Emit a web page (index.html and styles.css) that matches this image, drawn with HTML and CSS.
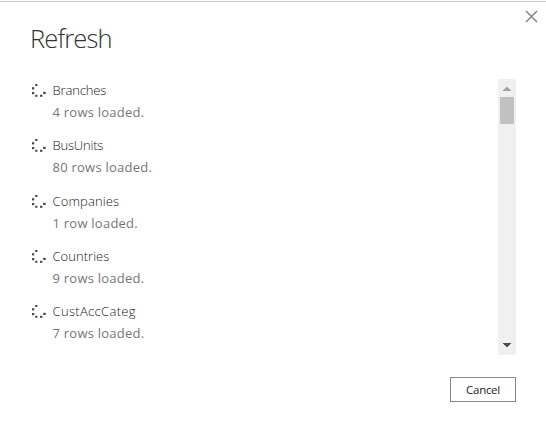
FILE: index.html
```html
<!DOCTYPE html>
<html lang="en">
<head>
<meta charset="utf-8">
<title>Refresh</title>
<link rel="stylesheet" href="styles.css">
</head>
<body>
<svg width="0" height="0" class="defs" aria-hidden="true">
  <symbol id="dots" viewBox="0 0 16 16">
    <g fill="#484848"><rect x="5.2" y="2" width="2.2" height="2"/><rect x="2" y="5.2" width="2.2" height="2.2"/><rect x="2" y="10" width="2.2" height="2.2"/><rect x="5.2" y="12.8" width="2.2" height="2"/><rect x="10" y="12.8" width="2.4" height="2"/><rect x="13.2" y="9.8" width="2.5" height="2.2"/></g>
  </symbol>
</svg>
<main class="dialog">
  <button class="close" aria-label="Close"><svg width="13" height="13" viewBox="0 0 13 13"><path d="M1 1 12 12M12 1 1 12" stroke="#858585" stroke-width="1.5"/></svg></button>
  <h1>Refresh</h1>
  <section class="content">
    <ul class="tables">
      <li><svg class="spinner"><use href="#dots"/></svg><div><p class="name n1">Branches</p><p class="status">4 rows loaded.</p></div></li>
      <li><svg class="spinner"><use href="#dots"/></svg><div><p class="name n2">BusUnits</p><p class="status">80 rows loaded.</p></div></li>
      <li><svg class="spinner"><use href="#dots"/></svg><div><p class="name n3">Companies</p><p class="status">1 row loaded.</p></div></li>
      <li><svg class="spinner"><use href="#dots"/></svg><div><p class="name n4">Countries</p><p class="status">9 rows loaded.</p></div></li>
      <li><svg class="spinner"><use href="#dots"/></svg><div><p class="name n5">CustAccCateg</p><p class="status">7 rows loaded.</p></div></li>
    </ul>
    <div class="scrollbar">
      <svg width="18" height="18" shape-rendering="crispEdges"><path d="M4.5 12 9 7.5 13.5 12Z" fill="#a3a3a3"/></svg>
      <div class="thumb"></div>
      <svg class="down" width="18" height="18" shape-rendering="crispEdges"><path d="M4.5 6 9 10.5 13.5 6Z" fill="#505050"/></svg>
    </div>
  </section>
  <footer><button class="cancel">Cancel</button></footer>
</main>
</body>
</html>
```
FILE: styles.css
```css
* { box-sizing: border-box; }
body { margin: 0; background: #fff; font-family: "Open Sans", "Noto Sans", sans-serif; }
h1, p, ul { margin: 0; padding: 0; }
.defs { position: absolute; }
.dialog { position: relative; height: 428px; padding: 19px 30px 0; border-top: 1px solid #fff; box-shadow: inset 0 1px 0 #c8c8c8; }
.close { position: absolute; top: 9px; right: 8px; width: 13px; height: 13px; padding: 0; border: 0; background: none; }
.close svg { display: block; }
h1 { height: 59px; font-size: 25.5px; line-height: 37px; font-weight: 300; color: #333; letter-spacing: -0.85px; }
.content { display: flex; justify-content: space-between; height: 276px; }
.tables { list-style: none; }
.tables li { display: flex; height: 55.25px; }
.spinner { width: 16px; height: 16px; margin: 3px 6.5px 0 0; }
.name, .status { height: 22px; line-height: 22px; font-size: 13px; white-space: nowrap; }
.name { font-weight: 300; color: #222; }
.n1 { letter-spacing: -0.13px; }
.n2 { letter-spacing: -0.2px; }
.n3 { letter-spacing: 0.12px; }
.n4 { letter-spacing: 0.03px; }
.n5 { letter-spacing: 0.32px; }
.status { color: #767676; letter-spacing: 0.24px; }
.scrollbar { display: flex; flex-direction: column; width: 18px; background: #f0f0f0; }
.scrollbar svg { display: block; }
.thumb { width: 14px; height: 27px; margin: 0 2px; background: #c1c1c1; }
.down { margin-top: auto; }
footer { display: flex; justify-content: flex-end; padding-top: 22px; }
.cancel { width: 66px; height: 25px; padding: 0; border: 1px solid #858585; background: #fff; color: #222; font: 11.5px/23px "Open Sans", sans-serif; letter-spacing: -0.3px; }
```
